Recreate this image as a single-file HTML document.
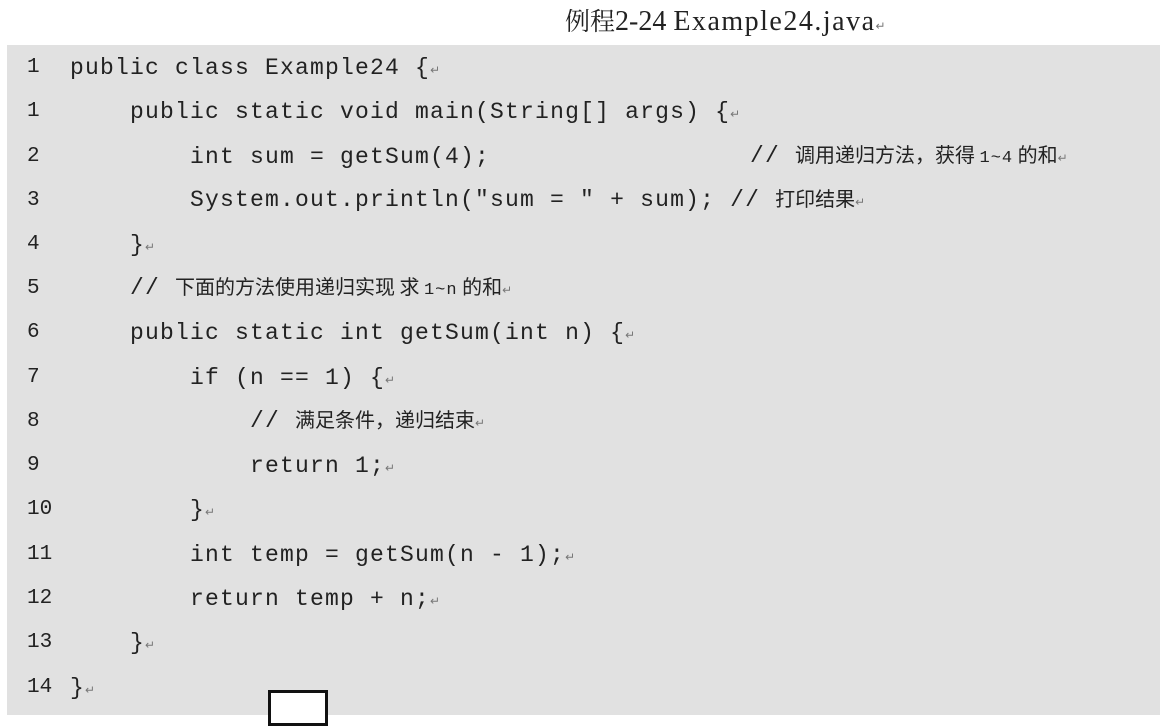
<!DOCTYPE html>
<html><head><meta charset="utf-8"><style>
body{margin:0;width:1160px;height:708px;background:#fff;position:relative;overflow:hidden}
.title{position:absolute;left:565px;top:4px;font:28px "Liberation Serif","Noto Serif CJK SC",serif;color:#222;white-space:pre;line-height:36px}
.title .cj{font-size:25px;letter-spacing:0}
.title .lat{letter-spacing:1.5px}
.box{position:absolute;left:7px;top:45px;width:1160px;height:670px;background:#e1e1e1}
.l{position:absolute;font:23px "Liberation Mono","Noto Sans CJK SC",monospace;letter-spacing:1.2px;color:#222;white-space:pre;line-height:24px}
.n{position:absolute;left:27px;font:21px "Liberation Mono",monospace;color:#222;line-height:24px}
.c{font-family:"Noto Sans CJK SC",sans-serif;letter-spacing:0;font-size:20px}
.r{font-size:12px;color:#777;letter-spacing:0}
.small{font-size:17px;letter-spacing:1px}
.sq{position:absolute;left:268px;top:690px;width:54px;height:30px;border:3px solid #111;background:#fff}
</style></head><body>
<div class="title"><span class="cj">例程</span>2-24 <span class="lat">Example24.java</span><span class="r">↵</span></div>
<div class="box"></div>
<div class="n" style="top:56px">1</div><div class="l" style="left:70px;top:56px">public class Example24 {<span class="r">↵</span></div>
<div class="n" style="top:100px">1</div><div class="l" style="left:130px;top:100px">public static void main(String[] args) {<span class="r">↵</span></div>
<div class="n" style="top:145px">2</div><div class="l" style="left:190px;top:145px">int sum = getSum(4);</div>
<div class="l" style="left:750px;top:142px">// <span class="c">调用递归方法，获得 </span><span class="small">1~4</span><span class="c"> 的和</span><span class="r">↵</span></div>
<div class="n" style="top:189px">3</div><div class="l" style="left:190px;top:186px">System.out.println("sum = " + sum); // <span class="c">打印结果</span><span class="r">↵</span></div>
<div class="n" style="top:233px">4</div><div class="l" style="left:130px;top:233px">}<span class="r">↵</span></div>
<div class="n" style="top:277px">5</div><div class="l" style="left:130px;top:274px">// <span class="c">下面的方法使用递归实现 求 </span><span class="small">1~n</span><span class="c"> 的和</span><span class="r">↵</span></div>
<div class="n" style="top:321px">6</div><div class="l" style="left:130px;top:321px">public static int getSum(int n) {<span class="r">↵</span></div>
<div class="n" style="top:366px">7</div><div class="l" style="left:190px;top:366px">if (n == 1) {<span class="r">↵</span></div>
<div class="n" style="top:410px">8</div><div class="l" style="left:250px;top:407px">// <span class="c">满足条件，递归结束</span><span class="r">↵</span></div>
<div class="n" style="top:454px">9</div><div class="l" style="left:250px;top:454px">return 1;<span class="r">↵</span></div>
<div class="n" style="top:498px">10</div><div class="l" style="left:190px;top:498px">}<span class="r">↵</span></div>
<div class="n" style="top:543px">11</div><div class="l" style="left:190px;top:543px">int temp = getSum(n - 1);<span class="r">↵</span></div>
<div class="n" style="top:587px">12</div><div class="l" style="left:190px;top:587px">return temp + n;<span class="r">↵</span></div>
<div class="n" style="top:631px">13</div><div class="l" style="left:130px;top:631px">}<span class="r">↵</span></div>
<div class="n" style="top:676px">14</div><div class="l" style="left:70px;top:676px">}<span class="r">↵</span></div>
<div class="sq"></div>
</body></html>
